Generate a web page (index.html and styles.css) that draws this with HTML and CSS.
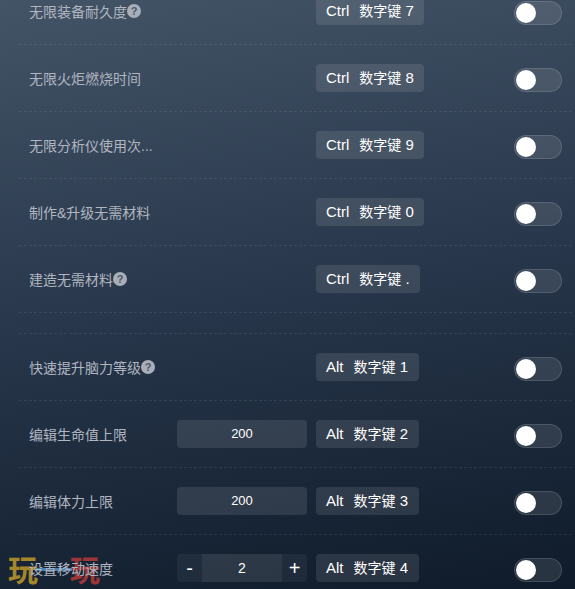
FILE: index.html
```html
<!DOCTYPE html>
<html lang="zh-CN">
<head>
<meta charset="utf-8">
<title>修改器</title>
<link rel="stylesheet" href="styles.css">
</head>
<body>
<div class="mark"><span class="gold">玩</span><span class="dash"></span><span class="red">玩</span></div>
<main class="panel">
  <div class="group">
    <div class="row"><div class="label"><span>无限装备耐久度</span><i class="help">?</i></div><div class="mid"></div><div class="key"><span>Ctrl</span><span><span class="cjk">数字键</span> 7</span></div><div class="toggle"><b></b></div></div>
    <div class="row"><div class="label"><span>无限火炬燃烧时间</span></div><div class="mid"></div><div class="key"><span>Ctrl</span><span><span class="cjk">数字键</span> 8</span></div><div class="toggle"><b></b></div></div>
    <div class="row"><div class="label"><span>无限分析仪使用次...</span></div><div class="mid"></div><div class="key"><span>Ctrl</span><span><span class="cjk">数字键</span> 9</span></div><div class="toggle"><b></b></div></div>
    <div class="row"><div class="label"><span>制作&amp;升级无需材料</span></div><div class="mid"></div><div class="key"><span>Ctrl</span><span><span class="cjk">数字键</span> 0</span></div><div class="toggle"><b></b></div></div>
    <div class="row"><div class="label"><span>建造无需材料</span><i class="help">?</i></div><div class="mid"></div><div class="key"><span>Ctrl</span><span><span class="cjk">数字键</span> .</span></div><div class="toggle"><b></b></div></div>
  </div>
  <div class="spacer"></div>
  <div class="group">
    <div class="row"><div class="label"><span>快速提升脑力等级</span><i class="help">?</i></div><div class="mid"></div><div class="key"><span>Alt</span><span><span class="cjk">数字键</span> 1</span></div><div class="toggle"><b></b></div></div>
    <div class="row"><div class="label"><span>编辑生命值上限</span></div><div class="mid"><div class="field">200</div></div><div class="key"><span>Alt</span><span><span class="cjk">数字键</span> 2</span></div><div class="toggle"><b></b></div></div>
    <div class="row"><div class="label"><span>编辑体力上限</span></div><div class="mid"><div class="field">200</div></div><div class="key"><span>Alt</span><span><span class="cjk">数字键</span> 3</span></div><div class="toggle"><b></b></div></div>
    <div class="row"><div class="label"><span>设置移动速度</span></div><div class="mid"><div class="stepper"><span class="step">-</span><span class="value">2</span><span class="step">+</span></div></div><div class="key"><span>Alt</span><span><span class="cjk">数字键</span> 4</span></div><div class="toggle"><b></b></div></div>
  </div>
</main>
</body>
</html>
```
FILE: styles.css
```css
* { box-sizing: border-box; }
html, body { margin: 0; height: 100%; }
body {
  position: relative;
  overflow: hidden;
  background: linear-gradient(170deg, #445467 0%, #27364a 50%, #0f1b2a 100%);
  font-family: "Liberation Sans", "Noto Sans CJK SC", sans-serif;
}
.panel { position: relative; margin-top: -22px; padding: 0 3px 0 19px; }
.row {
  display: flex;
  align-items: center;
  height: 67px;
  padding: 0 10px;
  border-bottom: 1px dashed rgba(255, 255, 255, 0.08);
}
.spacer { height: 21px; border-bottom: 1px dashed rgba(255, 255, 255, 0.08); }
.label {
  display: flex;
  align-items: center;
  width: 148px;
  font-size: 14px;
  color: #afb6c0;
  flex: none;
}
.help {
  width: 14px;
  height: 14px;
  border-radius: 50%;
  background: #a9afb8;
  color: #4a586a;
  font: bold 11px/14px "Liberation Sans", sans-serif;
  text-align: center;
}
.mid { width: 139px; flex: none; }
.field {
  width: 130px;
  height: 28px;
  border-radius: 4px;
  background: rgba(255, 255, 255, 0.1);
  color: #fff;
  font-size: 13px;
  line-height: 28px;
  text-align: center;
}
.stepper {
  display: flex;
  width: 130px;
  height: 28px;
  border-radius: 4px;
  overflow: hidden;
  background: rgba(255, 255, 255, 0.05);
  color: #fff;
  line-height: 28px;
  text-align: center;
}
.step { width: 25px; font-size: 20px; flex: none; }
.value { flex: 1; font-size: 14px; background: rgba(255, 255, 255, 0.06); }
.key {
  display: flex;
  gap: 10px;
  height: 28px;
  padding: 0 10.5px 0 10px;
  border-radius: 4px;
  background: rgba(255, 255, 255, 0.1);
  color: #fff;
  font-size: 15px;
  line-height: 28px;
  white-space: nowrap;
}
.cjk { font-size: 14px; }
.toggle {
  width: 48px;
  height: 24px;
  margin: 4px 0 0 auto;
  padding: 1px;
  border-radius: 12px;
  border: 1px solid rgba(255, 255, 255, 0.13);
  background: rgba(255, 255, 255, 0.1);
}
.toggle b { display: block; width: 20px; height: 20px; border-radius: 50%; background: #fff; }
.mark {
  position: absolute;
  left: 8px;
  bottom: 5px;
  display: flex;
  align-items: center;
  width: 92px;
  font-family: "Noto Sans CJK SC", sans-serif;
  font-size: 30px;
  line-height: 32px;
  font-weight: 700;
}
.gold { color: #a5872a; }
.red { color: #9c3636; margin-left: auto; }
.dash { position: absolute; left: 28px; top: 16px; width: 36px; height: 3px; background: #4a7fae; }
```
